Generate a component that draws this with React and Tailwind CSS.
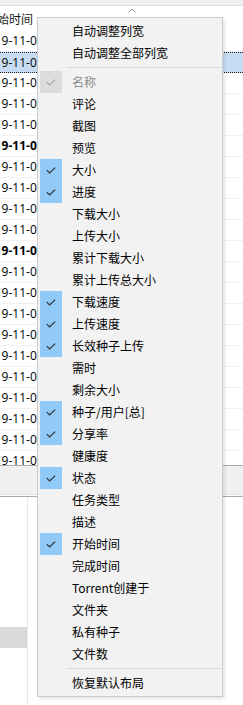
import React from 'react';

const items = [
  { label: '名称', checked: true, disabled: true },
  { label: '评论' },
  { label: '截图' },
  { label: '预览' },
  { label: '大小', checked: true },
  { label: '进度', checked: true },
  { label: '下载大小' },
  { label: '上传大小' },
  { label: '累计下载大小' },
  { label: '累计上传总大小' },
  { label: '下载速度', checked: true },
  { label: '上传速度', checked: true },
  { label: '长效种子上传', checked: true },
  { label: '需时' },
  { label: '剩余大小' },
  { label: '种子/用户[总]', checked: true },
  { label: '分享率', checked: true },
  { label: '健康度' },
  { label: '状态', checked: true },
  { label: '任务类型' },
  { label: '描述' },
  { label: '开始时间', checked: true },
  { label: '完成时间' },
  { label: 'Torrent创建于' },
  { label: '文件夹' },
  { label: '私有种子' },
  { label: '文件数' },
];

const Check = ({ color }) => (
  <svg width="10" height="7" viewBox="0 0 10 7" fill="none">
    <path d="M0.8 3.2 L3.6 6 L9.2 0.6" stroke={color} strokeWidth="1.2" />
  </svg>
);

const MenuItem = ({ label, checked, disabled }) => (
  <div className="flex h-[22px] items-center">
    <div
      className={
        'flex h-[22px] w-[22px] items-center justify-center ' +
        (checked ? (disabled ? 'bg-[#dcdcdc]' : 'bg-[#91c9f7]') : '')
      }
    >
      {checked && <Check color={disabled ? '#a6a6a6' : '#333333'} />}
    </div>
    <span className={'ml-[10px] ' + (disabled ? 'text-[#8c8c8c]' : 'text-black')}>{label}</span>
  </div>
);

const Separator = () => (
  <div className="flex h-[7px] items-center pl-[28px] pr-[1px]">
    <div className="h-px w-full bg-[#d7d7d7]" />
  </div>
);

const rows = Array.from({ length: 21 }, (_, i) => i);

export default function App() {
  return (
    <div
      className="relative h-[705px] w-[243px] overflow-hidden bg-white text-[12px] leading-none"
      style={{ fontFamily: '"Noto Sans CJK SC", "Noto Sans", sans-serif' }}
    >
      {/* table */}
      <div className="h-[6px] border-b border-[#dcdcdc] bg-[#f0f0f0]" />
      <div className="relative flex h-[25px] items-center">
        <span className="ml-[-15px] text-[#1a1a1a]">开始时间</span>
        <svg className="absolute left-[128px] top-[2px]" width="8" height="5" viewBox="0 0 8 5" fill="none">
          <path d="M0.5 4.5 L4 1 L7.5 4.5" stroke="#9a9a9a" strokeWidth="1" />
        </svg>
      </div>
      <div className="h-[434px] overflow-hidden">
        {rows.map((i) => (
          <div
            key={i}
            className={
              'flex h-[21px] items-center ' +
              (i === 1
                ? 'border-y border-dotted border-[#222] bg-[#c7dcf2]'
                : 'border-b border-[#f0f0f0]')
            }
          >
            <span
              className={'ml-[-19px] whitespace-nowrap font-["Open_Sans",sans-serif] ' + (i === 5 || i === 10 ? 'font-bold' : '')}
            >
              2019-11-05 10:23:45
            </span>
          </div>
        ))}
      </div>
      <div className="h-[29px] border-t border-[#ababab] bg-[#f0f0f0]" />
      <div className="h-px bg-[#e3e3e3]" />
      <div className="h-px bg-white" />
      <div className="h-px bg-[#a9a9a9]" />
      <div className="flex h-[208px]">
        <div className="flex w-[28px] flex-col border-r border-[#e8e8e8] pt-[130px]">
          <div className="h-[21px] w-[27px] bg-[#d9d9d9]" />
        </div>
      </div>

      {/* context menu */}
      <div className="absolute left-[37px] top-[17px] w-[186px] border border-[#cccccc] bg-[#f2f2f2] pb-[2px] pl-[2px] pt-[2px] shadow-[2px_2px_3px_rgba(0,0,0,0.1)]">
        <div className="flex h-[22px] items-center pl-[32px]">自动调整列宽</div>
        <div className="flex h-[22px] items-center pl-[32px]">自动调整全部列宽</div>
        <Separator />
        {items.map((it) => (
          <MenuItem key={it.label} {...it} />
        ))}
        <Separator />
        <div className="flex h-[22px] items-center pl-[32px]">恢复默认布局</div>
      </div>
    </div>
  );
}
